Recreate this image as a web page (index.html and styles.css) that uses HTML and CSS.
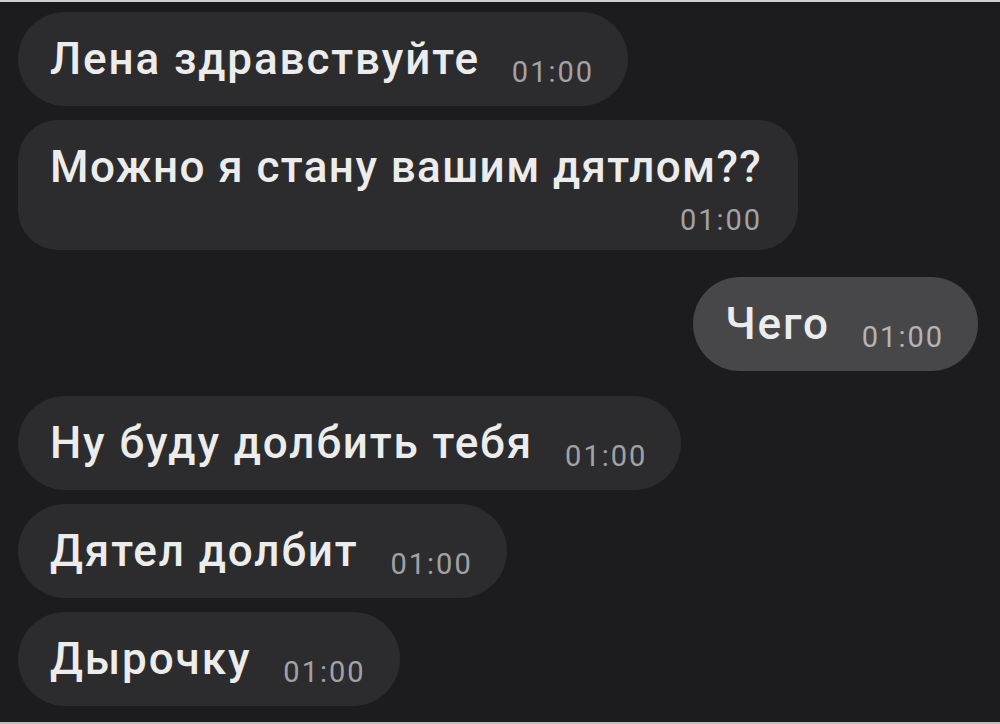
FILE: index.html
```html
<!DOCTYPE html>
<html lang="ru">
<head>
<meta charset="utf-8">
<title>Чат</title>
<link rel="stylesheet" href="styles.css">
</head>
<body>
<div class="screen">
  <div class="chat">
    <div class="msg in"><span class="text">Лена здравствуйте</span><span class="time">01:00</span></div>
    <div class="msg in tall"><div class="text">Можно я стану вашим дятлом??</div><div class="time-row"><span class="time">01:00</span></div></div>
    <div class="msg out"><span class="text">Чего</span><span class="time">01:00</span></div>
    <div class="msg in"><span class="text">Ну буду долбить тебя</span><span class="time">01:00</span></div>
    <div class="msg in"><span class="text">Дятел долбит</span><span class="time">01:00</span></div>
    <div class="msg in"><span class="text">Дырочку</span><span class="time">01:00</span></div>
  </div>
</div>
</body>
</html>
```
FILE: styles.css
```css
html, body {
  margin: 0;
  padding: 0;
  background: #1c1c1e;
}
.screen {
  box-sizing: border-box;
  width: 1000px;
  height: 724px;
  background: #1c1c1e;
  border-top: 2px solid #cfcfcf;
  border-bottom: 2px solid #bdbdbd;
  overflow: hidden;
  font-family: Roboto, "Liberation Sans", Arial, sans-serif;
  color: #ebebeb;
}
.chat {
  display: flex;
  flex-direction: column;
  align-items: flex-start;
  gap: 14px;
  padding: 10px 22px 0 18px;
}
.msg {
  background: #2c2c2e;
  border-radius: 47px;
  padding: 21px 34px 21px 32px;
  font-size: 44px;
  line-height: 52px;
  white-space: nowrap;
}
.msg.out {
  align-self: flex-end;
  background: #47474a;
  margin: 13px 0 11px;
  padding-right: 34px;
}
.text {
  color: #ececec;
  font-weight: 500;
  letter-spacing: 1.9px;
}
.time {
  font-size: 29px;
  line-height: 20px;
  letter-spacing: 2px;
  color: #a2a2a6;
  margin-left: 32px;
  vertical-align: -8px;
}
.msg.out .time {
  color: #b4b4b6;
}
.msg.tall {
  border-radius: 40px;
  padding: 21px 36px 14px 32px;
}
.msg.tall .text {
  letter-spacing: 1.4px;
}
.time-row {
  text-align: right;
  margin-top: 6px;
  line-height: 32px;
}
.time-row .time {
  margin-left: 0;
  vertical-align: baseline;
  line-height: 32px;
}
```
